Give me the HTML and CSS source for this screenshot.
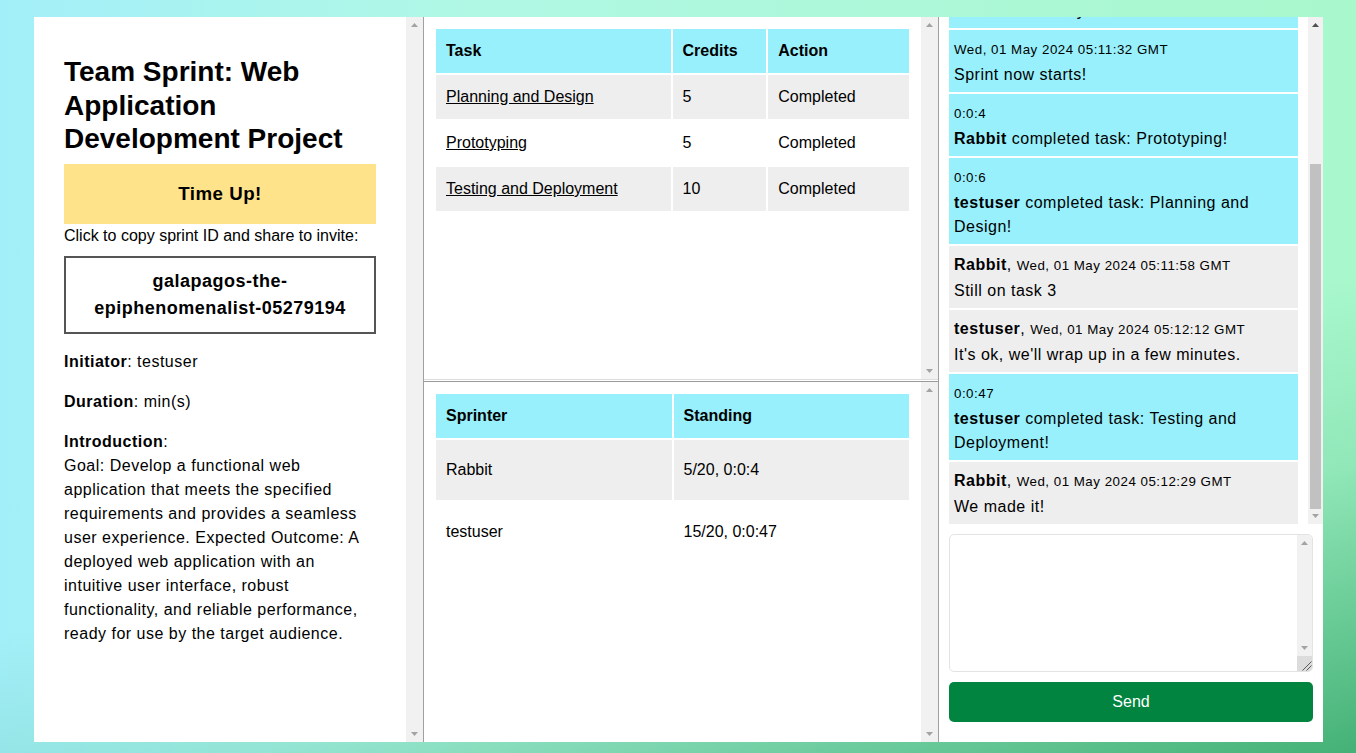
FILE: index.html
```html
<!DOCTYPE html>
<html lang="en">
<head>
<meta charset="utf-8">
<title>Team Sprint</title>
<link rel="stylesheet" href="styles.css">
</head>
<body>
<main class="app">
  <aside class="info">
    <div class="info-body">
      <h1 class="title">Team Sprint: Web Application Development Project</h1>
      <div class="status">Time Up!</div>
      <div class="copy-hint">Click to copy sprint ID and share to invite:</div>
      <div class="sprint-id">galapagos-the-epiphenomenalist-05279194</div>
      <p class="meta"><b>Initiator</b>: testuser</p>
      <p class="meta"><b>Duration</b>: min(s)</p>
      <p class="meta"><b>Introduction</b>:<br>Goal: Develop a functional web application that meets the specified requirements and provides a seamless user experience. Expected Outcome: A deployed web application with an intuitive user interface, robust functionality, and reliable performance, ready for use by the target audience.</p>
    </div>
    <div class="vbar">
      <svg class="vbar-btn" viewBox="0 0 17 15"><path d="M5 10h7L8.5 6z"/></svg>
      <div class="vbar-track"></div>
      <svg class="vbar-btn" viewBox="0 0 17 15"><path d="M5 5h7L8.5 9z"/></svg>
    </div>
  </aside>

  <section class="board">
    <div class="panel panel-tasks">
      <div class="panel-body">
        <table class="grid tasks">
          <thead>
            <tr><th class="c-task">Task</th><th class="c-credits">Credits</th><th class="c-action">Action</th></tr>
          </thead>
          <tbody>
            <tr><td><a href="#">Planning and Design</a></td><td>5</td><td>Completed</td></tr>
            <tr><td><a href="#">Prototyping</a></td><td>5</td><td>Completed</td></tr>
            <tr><td><a href="#">Testing and Deployment</a></td><td>10</td><td>Completed</td></tr>
          </tbody>
        </table>
      </div>
      <div class="vbar">
        <svg class="vbar-btn" viewBox="0 0 17 15"><path d="M5 10h7L8.5 6z"/></svg>
        <div class="vbar-track"></div>
        <svg class="vbar-btn" viewBox="0 0 17 15"><path d="M5 5h7L8.5 9z"/></svg>
      </div>
    </div>
    <div class="panel panel-standings">
      <div class="panel-body">
        <table class="grid standings">
          <thead>
            <tr><th>Sprinter</th><th>Standing</th></tr>
          </thead>
          <tbody>
            <tr><td>Rabbit</td><td>5/20, 0:0:4</td></tr>
            <tr><td>testuser</td><td>15/20, 0:0:47</td></tr>
          </tbody>
        </table>
      </div>
      <div class="vbar">
        <svg class="vbar-btn" viewBox="0 0 17 15"><path d="M5 10h7L8.5 6z"/></svg>
        <div class="vbar-track"></div>
        <svg class="vbar-btn" viewBox="0 0 17 15"><path d="M5 5h7L8.5 9z"/></svg>
      </div>
    </div>
  </section>

  <section class="chat">
    <div class="chat-window">
      <div class="chat-scroll">
        <div class="chat-log">
          <div class="msg system"><div class="msg-head"><span class="stamp">Wed, 01 May 2024 05:10:47 GMT</span></div><div><b>testuser</b> created the sprint.</div></div>
          <div class="msg system"><div class="msg-head"><span class="stamp">Wed, 01 May 2024 05:11:05 GMT</span></div><div><b>Rabbit</b> is ready!</div></div>
          <div class="msg system"><div class="msg-head"><span class="stamp">Wed, 01 May 2024 05:11:20 GMT</span></div><div><b>testuser</b> is ready!</div></div>
          <div class="msg system"><div class="msg-head"><span class="stamp">Wed, 01 May 2024 05:11:32 GMT</span></div><div>Sprint now starts!</div></div>
          <div class="msg system"><div class="msg-head"><span class="stamp">0:0:4</span></div><div><b>Rabbit</b> completed task: Prototyping!</div></div>
          <div class="msg system"><div class="msg-head"><span class="stamp">0:0:6</span></div><div><b>testuser</b> completed task: Planning and Design!</div></div>
          <div class="msg"><div class="msg-head"><b>Rabbit</b>, <span class="stamp">Wed, 01 May 2024 05:11:58 GMT</span></div><div>Still on task 3</div></div>
          <div class="msg"><div class="msg-head"><b>testuser</b>, <span class="stamp">Wed, 01 May 2024 05:12:12 GMT</span></div><div>It's ok, we'll wrap up in a few minutes.</div></div>
          <div class="msg system"><div class="msg-head"><span class="stamp">0:0:47</span></div><div><b>testuser</b> completed task: Testing and Deployment!</div></div>
          <div class="msg"><div class="msg-head"><b>Rabbit</b>, <span class="stamp">Wed, 01 May 2024 05:12:29 GMT</span></div><div>We made it!</div></div>
        </div>
      </div>
      <div class="vbar vbar-thin">
        <svg class="vbar-btn active" viewBox="0 0 15 15"><path d="M4 10h7L7.5 6z"/></svg>
        <div class="vbar-track"><div class="vbar-thumb"></div></div>
        <svg class="vbar-btn" viewBox="0 0 15 15"><path d="M4 5h7L7.5 9z"/></svg>
      </div>
    </div>
    <form class="composer">
      <div class="composer-box">
        <textarea class="composer-input" aria-label="Message"></textarea>
        <div class="vbar vbar-thin">
          <svg class="vbar-btn" viewBox="0 0 15 15"><path d="M4 10h7L7.5 6z"/></svg>
          <div class="vbar-track"></div>
          <svg class="vbar-btn" viewBox="0 0 15 15"><path d="M4 5h7L7.5 9z"/></svg>
          <svg class="resizer" viewBox="0 0 15 15"><path d="M5.5 14.5L14.5 5.5M9.5 14.5L14.5 9.5"/></svg>
        </div>
      </div>
      <button type="button" class="send">Send</button>
    </form>
  </section>
</main>
</body>
</html>
```

FILE: styles.css
```css
html {
  height: 100%;
}

body {
  height: 100%;
  margin: 0;
  padding: 17px 33px 11px 34px;
  box-sizing: border-box;
  font-family: "Liberation Sans", Arial, sans-serif;
  font-size: 16px;
  color: #000;
  background:
    linear-gradient(165deg, rgba(30, 150, 85, 0) 57%, rgba(30, 150, 85, 0.17) 74%, rgba(30, 150, 85, 0.72) 100%),
    linear-gradient(to right, #a3eff9 0%, #b0f8e4 35%, #a8f8cc 100%);
}

.app {
  height: 100%;
  display: grid;
  grid-template-columns: 390px 515px 384px;
  background: #fff;
}

/* ---------- drawn scrollbars ---------- */
.vbar {
  flex: none;
  width: 17px;
  display: flex;
  flex-direction: column;
  background: #f1f1f1;
}

.vbar-thin {
  width: 15px;
}

.vbar-btn {
  display: block;
  flex: none;
  width: 100%;
  height: 15px;
  fill: #a3a3a3;
}

.vbar-btn.active {
  fill: #505050;
}

.vbar-track {
  flex: 1;
  min-height: 0;
  display: flex;
  flex-direction: column;
  justify-content: flex-end;
}

.vbar-thumb {
  height: 345px;
  margin: 0 2px;
  background: #c1c1c1;
}

.resizer {
  display: block;
  flex: none;
  width: 15px;
  height: 15px;
  background: #dcdcdc;
  stroke: #5a5a5a;
  stroke-width: 1;
  fill: none;
}

/* ---------- left column ---------- */
.info {
  min-height: 0;
  display: flex;
  border-right: 1px solid #a0a0a0;
}

.info-body {
  flex: 1;
  min-width: 0;
  overflow: hidden;
  padding: 30px;
}

.title {
  margin: 8px 0 8px;
  font-size: 28px;
  line-height: 1.2;
  font-weight: bold;
}

.status {
  background: #ffe38b;
  text-align: center;
  font-weight: bold;
  font-size: 18.72px;
  line-height: 28px;
  padding: 16px 0;
  letter-spacing: 0.5px;
}

.copy-hint {
  line-height: 24px;
}

.sprint-id {
  margin-top: 8px;
  border: 2px solid #555;
  padding: 10px;
  text-align: center;
  font-weight: bold;
  font-size: 18px;
  line-height: 27px;
  letter-spacing: 0.5px;
}

.meta {
  margin: 16px 0;
  line-height: 24px;
  letter-spacing: 0.5px;
}

/* ---------- middle column ---------- */
.board {
  min-height: 0;
  display: grid;
  grid-template-rows: 363px 1fr;
  border-right: 1px solid #a0a0a0;
}

.panel {
  min-height: 0;
  display: flex;
  box-sizing: border-box;
}

.panel-body {
  flex: 1;
  min-width: 0;
  overflow: hidden;
  padding: 10px;
}

.panel-tasks {
  border-bottom: 1px solid #dcdcdc;
}

.panel-standings {
  margin-top: 1px;
  border-top: 1px solid #9a9a9a;
}

.grid {
  width: 100%;
  border-collapse: separate;
  border-spacing: 2px;
}

.grid th,
.grid td {
  padding: 10px;
  text-align: left;
  line-height: 24px;
}

.grid th {
  background: #98f0fc;
  font-weight: bold;
}

.grid tbody tr:nth-child(odd) td {
  background: #eeeeee;
}

.grid a {
  color: #000;
  text-decoration: underline;
}

.c-task { width: 50%; }
.c-credits { width: 20%; }
.c-action { width: 30%; }

.standings th {
  width: 50%;
}

.standings td {
  padding: 18px 10px;
}

/* ---------- right column ---------- */
.chat {
  min-height: 0;
  display: flex;
  flex-direction: column;
  padding-left: 10px;
}

.chat-window {
  flex: 1;
  min-height: 0;
  display: flex;
}

.chat-scroll {
  flex: 1;
  min-width: 0;
  overflow: hidden;
  display: flex;
  flex-direction: column-reverse;
}

.msg {
  margin-right: 10px;
  padding: 7px 5px 5px;
  background: #eeeeee;
  line-height: 24px;
  letter-spacing: 0.5px;
}

.msg + .msg {
  margin-top: 2px;
}

.msg.system {
  background: #98f0fc;
}

.msg-head {
  margin-bottom: 2px;
}

.stamp {
  font-size: 13.33px;
  line-height: 1;
}

.composer {
  margin: 0;
  padding-right: 10px;
  display: flex;
  flex-direction: column;
}

.composer-box {
  display: flex;
  height: 138px;
  margin-top: 10px;
  box-sizing: border-box;
  border: 1px solid #e3e3e3;
  border-radius: 5px;
  overflow: hidden;
  background: #fff;
}

.composer-input {
  flex: 1;
  min-width: 0;
  margin: 0;
  padding: 2px;
  border: none;
  outline: none;
  resize: none;
  background: transparent;
  font-family: "Liberation Sans", Arial, sans-serif;
  font-size: 16px;
}

.send {
  height: 40px;
  margin: 10px 0 20px;
  border: none;
  border-radius: 5px;
  background: #00843f;
  color: #fff;
  font-family: "Liberation Sans", Arial, sans-serif;
  font-size: 16px;
}
```
